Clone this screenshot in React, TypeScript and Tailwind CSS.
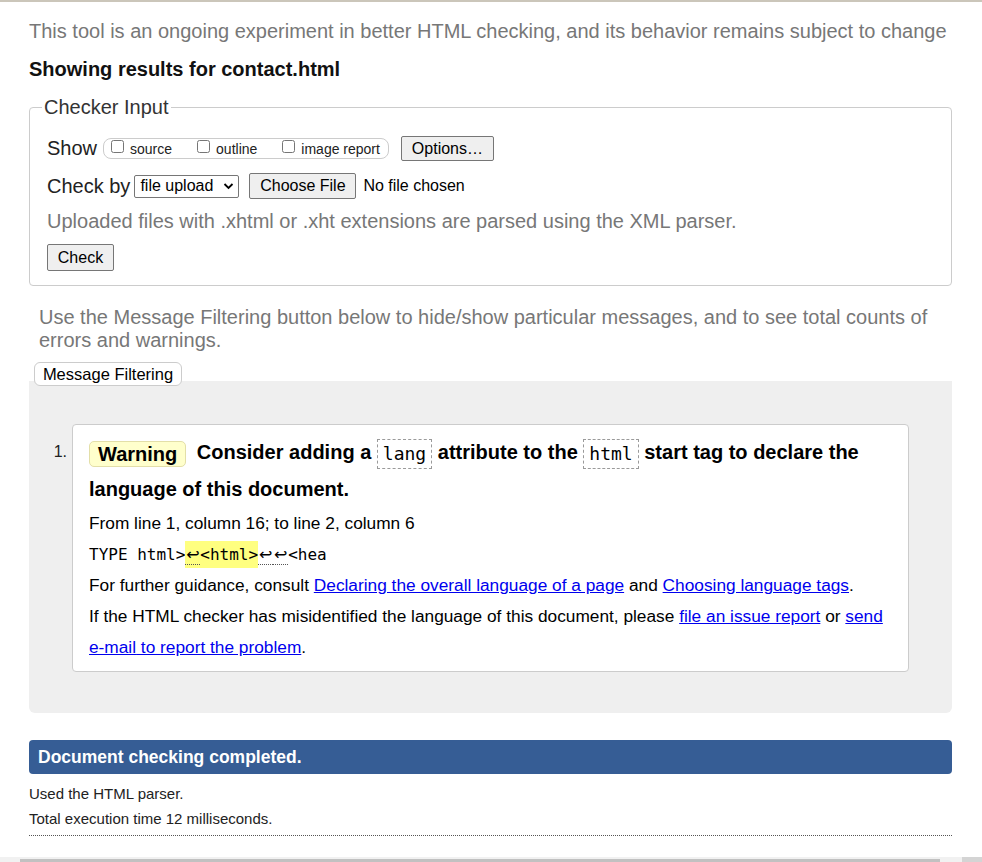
const SANS = "font-['Liberation_Sans',Arial,sans-serif]";
const MONO = "font-['DejaVu_Sans_Mono','Liberation_Mono',monospace]";

function NativeButton({ children, className = "" }: { children: React.ReactNode; className?: string }) {
  return (
    <button
      type="button"
      className={`rounded-[2px] border border-[#767676] bg-[#efefef] text-[16px] leading-none text-black ${className}`}
    >
      {children}
    </button>
  );
}

function Check({ label }: { label: string }) {
  return (
    <label className="flex items-center text-[14px] leading-none text-[#222]">
      <input type="checkbox" className="mr-[6px] h-[13px] w-[13px] -translate-y-[2px]" />
      {label}
    </label>
  );
}

function Code({ children }: { children: React.ReactNode }) {
  return (
    <code
      className={`${MONO} inline-block border border-dashed border-[#9a9a9a] px-[5px] align-middle text-[18px] font-normal leading-[28px]`}
    >
      {children}
    </code>
  );
}

function Ret() {
  return (
    <span className="inline-block w-[15px] border-b border-dotted border-[#555] text-center font-['DejaVu_Sans',sans-serif] leading-[18px]">
      ↩
    </span>
  );
}

export default function App() {
  return (
    <div className={`${SANS} flex h-[862px] w-full flex-col overflow-hidden bg-white text-black`}>
      <div className="h-[2px] bg-[#cbc6ba]" />

      <main className="flex-1 pl-[29px] pr-[30px]">
        <p className="mt-[18px] text-[20px] leading-[23px] text-[#777]">
          This tool is an ongoing experiment in better HTML checking, and its behavior remains subject to change
        </p>
        <h2 className="mt-[15px] text-[20px] font-bold leading-[23px] text-[#111]">
          Showing results for contact.html
        </h2>

        <fieldset className="mt-[15px] rounded-[4px] border border-[#ccc] px-[12px] pb-[14px] pt-[17px]">
          <legend className="px-[2px] text-[20px] leading-[23px] text-[#333]">Checker Input</legend>
          <div className="flex flex-col pl-[5px]">
            <div className="flex items-center">
              <span className="text-[20px] leading-[23px] text-[#222]">Show</span>
              <div className="ml-[6px] flex h-[21px] items-center gap-[25px] rounded-[8px] border border-[#ccc] pl-[7px] pr-[8px]">
                <Check label="source" />
                <Check label="outline" />
                <Check label="image report" />
              </div>
              <NativeButton className="ml-[12px] h-[25px] w-[93px]">Options…</NativeButton>
            </div>

            <div className="mt-[12px] flex items-center">
              <span className="text-[20px] leading-[23px] text-[#222]">Check by</span>
              <div className="ml-[4px] flex h-[23px] w-[105px] items-center justify-between rounded-[2px] border border-[#767676] bg-white pl-[5px] pr-[4px] text-[16px] leading-none">
                file upload
                <svg width="11" height="8" viewBox="0 0 11 8" fill="none" stroke="#000" strokeWidth="1.8">
                  <path d="M1.5 2 L5.5 6 L9.5 2" />
                </svg>
              </div>
              <NativeButton className="ml-[10px] h-[26px] w-[107px]">Choose File</NativeButton>
              <span className="ml-[7px] text-[16px] leading-none">No file chosen</span>
            </div>

            <p className="mt-[11px] text-[20px] leading-[23px] text-[#777]">
              Uploaded files with .xhtml or .xht extensions are parsed using the XML parser.
            </p>

            <div className="mt-[11px]">
              <NativeButton className="h-[27px] w-[67px]">Check</NativeButton>
            </div>
          </div>
        </fieldset>

        <p className="mt-[20px] pl-[10px] text-[20px] leading-[23px] text-[#777]">
          Use the Message Filtering button below to hide/show particular messages, and to see total counts of
          errors and warnings.
        </p>

        <button
          type="button"
          className="relative z-10 -mb-[5px] ml-[5px] mt-[10px] block h-[24px] w-[148px] rounded-[6px] border border-[#ccc] bg-white text-[16.5px] leading-none text-black"
        >
          Message Filtering
        </button>

        <section className="rounded-b-[6px] bg-[#efefef] pb-[41px] pt-[43px]">
          <ol className="flex">
            <span className="w-[43px] pr-[5px] pt-[16px] text-right text-[16px] leading-[23px] text-[#222]">1.</span>
            <li className="mr-[43px] flex-1 rounded-[4px] border border-[#ccc] bg-white px-[16px] pb-[8px] pt-[9px]">
              <p className="text-[20px] font-bold leading-[37px]">
                <span className="mr-[5px] inline-block rounded-[5px] border border-[#e3dfa8] bg-[#ffffcc] px-[8px] align-middle leading-[24px]">
                  Warning
                </span>{" "}
                Consider adding a <Code>lang</Code> attribute to the <Code>html</Code> start tag to declare the
                language of this document.
              </p>
              <div className="text-[17.3px] leading-[31px]">
                <p>From line 1, column 16; to line 2, column 6</p>
                <p className={`${MONO} text-[16px]`}>
                  TYPE html&gt;
                  <span className="bg-[#ffff80] py-[4px]">
                    <Ret />
                    &lt;html&gt;
                  </span>
                  <Ret />
                  <Ret />
                  &lt;hea
                </p>
                <p>
                  For further guidance, consult{" "}
                  <a href="#" className="text-[#0000ee] underline">
                    Declaring the overall language of a page
                  </a>{" "}
                  and{" "}
                  <a href="#" className="text-[#0000ee] underline">
                    Choosing language tags
                  </a>
                  .
                </p>
                <p>
                  If the HTML checker has misidentified the language of this document, please{" "}
                  <a href="#" className="text-[#0000ee] underline">
                    file an issue report
                  </a>{" "}
                  or{" "}
                  <a href="#" className="text-[#0000ee] underline">
                    send <span className="whitespace-nowrap">e-mail</span> to report the problem
                  </a>
                  .
                </p>
              </div>
            </li>
          </ol>
        </section>

        <div className="mt-[27px] flex h-[34px] items-center rounded-[4px] bg-[#365d95] pl-[9px] text-[17.5px] font-bold text-white">
          Document checking completed.
        </div>

        <div className="mt-[7px] border-b border-dotted border-[#555] pb-[4px] text-[15px] leading-[25px] text-[#222]">
          <p>Used the HTML parser.</p>
          <p>Total execution time 12 milliseconds.</p>
        </div>
      </main>

      <div className="flex h-[5px] bg-[#f1f1f1]">
        <div className="ml-[20px] mt-[2px] h-[3px] w-[920px] bg-[#c1c1c1]" />
        <div className="ml-auto h-[5px] w-[20px] bg-[#d4d4d4]" />
      </div>
    </div>
  );
}
